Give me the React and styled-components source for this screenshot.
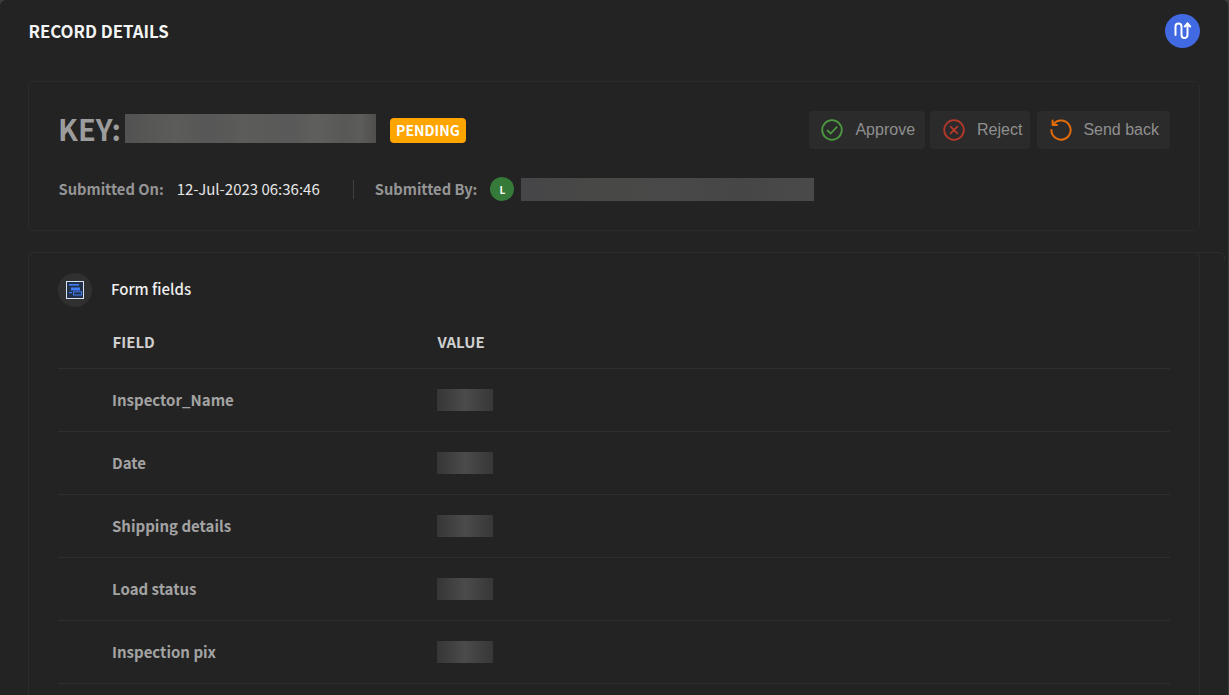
import styled, { createGlobalStyle } from 'styled-components';

const GlobalStyle = createGlobalStyle`
  html, body {
    margin: 0;
    height: 100%;
    overflow: hidden;
    background: #3c3c3c;
  }
`;

const Page = styled.div`
  height: 695px;
  box-sizing: border-box;
  overflow: hidden;
  padding: 0 0 0 28px;
  background: #232323;
  border-radius: 6px 6px 0 0;
  border-right: 1px solid #3a3a3a;
  font-family: 'Noto Sans CJK SC', 'Noto Sans', sans-serif;
`;

const Header = styled.header`
  display: flex;
  align-items: center;
  justify-content: space-between;
  height: 62px;
  margin-right: 28px;
`;

const Title = styled.h1`
  margin: 0 0 0 0.5px;
  font-size: 16.8px;
  font-weight: 700;
  color: #f4f4f4;
`;

const Logo = styled.div`
  width: 35px;
  height: 34px;
  border-radius: 50%;
  background: #4169e1;
  display: flex;
  align-items: center;
  justify-content: center;
`;

const Card = styled.section`
  position: relative;
  width: 1172px;
  box-sizing: border-box;
  border: 1px solid #2c2c2c;
  border-radius: 6px;
`;

const SummaryCard = styled(Card)`
  height: 150px;
  margin-top: 19px;
  padding: 28px 29px 0 29px;
`;

const TopRow = styled.div`
  display: flex;
  align-items: flex-start;
  justify-content: space-between;
`;

const KeyBlock = styled.div`
  display: flex;
  align-items: center;
  height: 37px;
`;

const KeyLabel = styled.span`
  font-size: 29px;
  font-weight: 700;
  color: #9c9c9c;
  margin: 0 4px 2px 0;
`;

const BlurBar = styled.div`
  width: ${p => p.$w}px;
  height: ${p => p.$h}px;
  flex: none;
  background: ${p => p.$bg};
`;

const StatusBadge = styled.span`
  margin: 4px 0 0 14px;
  padding-bottom: 2px;
  box-sizing: border-box;
  width: 76px;
  height: 25px;
  display: flex;
  align-items: center;
  justify-content: center;
  border-radius: 4px;
  background: #ffa500;
  color: #fff;
  font-size: 14px;
  font-weight: 700;
`;

const Actions = styled.div`
  display: flex;
  gap: 5px;
  margin-top: 1px;
`;

const ActionButton = styled.button`
  height: 38px;
  margin-left: ${p => p.$ml || 0}px;
  padding: 0 ${p => p.$pr}px 0 ${p => p.$pl}px;
  display: flex;
  align-items: center;
  gap: ${p => p.$gap}px;
  border: 0;
  border-radius: 4px;
  background: #2b2b2b;
  color: #8f8f8f;
  font-family: 'Liberation Sans', Arial, sans-serif;
  font-size: 16px;
`;

const MetaRow = styled.div`
  display: flex;
  align-items: center;
  height: 24px;
  margin-top: 28px;
  padding-left: 0.5px;
  font-size: 15px;
`;

const MetaLabel = styled.span`
  font-size: 14.7px;
  font-weight: 700;
  color: #959595;
  margin: 0 13px 2px 0;
`;

const MetaValue = styled.span`
  margin-bottom: 2px;
  color: #e6e6e6;
`;

const Divider = styled.span`
  width: 1px;
  height: 19px;
  margin: 0 21px 0 33px;
  background: #3a4043;
`;

const Avatar = styled.span`
  width: 24px;
  height: 24px;
  border-radius: 50%;
  background: #357a38;
  color: #fff;
  font-size: 10px;
  font-weight: 700;
  display: flex;
  align-items: center;
  justify-content: center;
  margin-right: 7px;
`;

const FieldsCard = styled(Card)`
  margin-top: 21px;
  height: 460px;
  padding: 20px 29px 0 29px;
  border-bottom: 0;
  &::after {
    content: '';
    position: absolute;
    top: -1px;
    left: 1100px;
    right: -26px;
    height: 8px;
    border-top: 1px solid #2c2c2c;
    border-right: 1px solid #2c2c2c;
    border-top-right-radius: 5px;
  }
`;

const SectionHead = styled.div`
  display: flex;
  align-items: center;
  gap: 19px;
  height: 34px;
`;

const SectionIcon = styled.div`
  width: 34px;
  height: 34px;
  border-radius: 50%;
  background: #303030;
  display: flex;
  align-items: center;
  justify-content: center;
`;

const SectionTitle = styled.span`
  margin-bottom: 3px;
  font-size: 15px;
  font-weight: 500;
  color: #eeeeee;
`;

const Row = styled.div`
  display: grid;
  grid-template-columns: 325px 1fr;
  align-items: center;
  box-sizing: border-box;
  height: ${p => (p.$head ? 62 : 63)}px;
  padding: ${p => (p.$head ? '8px 0 0 54.5px' : '0 0 0 54px')};
  border-bottom: 1px solid #2e2e2e;
`;

const HeadCell = styled.span`
  font-size: 15px;
  font-weight: 700;
  color: #cfcfcf;
`;

const FieldName = styled.span`
  margin-bottom: 2px;
  font-size: 15px;
  font-weight: 700;
  color: #a3a3a3;
`;

const rows = ['Inspector_Name', 'Date', 'Shipping details', 'Load status', 'Inspection pix'];

const blurKey =
  'linear-gradient(90deg, #525252, #5c5c5a 20%, #565756 33%, #5c5c5a 48%, #585958 66%, #5f5f5d 76%, #585857 88%, #5c5c5a 94%, #4f4e4d)';
const blurUser = 'linear-gradient(90deg, #464649, #484846 25%, #494949 50%, #464646 75%, #4a4a4a)';
const blurValue = 'linear-gradient(90deg, #363636, #4b4b4b 50%, #373737)';

const LogoIcon = () => (
  <svg width="22" height="22" viewBox="0 0 22 22" fill="none" stroke="#fff" strokeWidth="2" strokeLinecap="round" strokeLinejoin="round">
    <path d="M3.5 15V6.5a3 3 0 0 1 6 0V15a3 3 0 0 0 6 0V3.5" />
    <path d="M12.8 6.5l2.7-3 2.7 3" />
  </svg>
);

const FormIcon = () => (
  <svg width="18" height="18" viewBox="0 0 18 18">
    <rect x="0.5" y="0.5" width="17" height="17" fill="#23304a" stroke="#d5e4f0" />
    <rect x="3" y="3" width="10" height="1.6" fill="#3f7ff5" />
    <rect x="5" y="6.5" width="9" height="3" fill="#3f7ff5" />
    <rect x="3" y="11" width="3" height="1.2" fill="#3f7ff5" />
    <rect x="7.5" y="10.8" width="8" height="3.2" fill="none" stroke="#3f7ff5" />
  </svg>
);

const ApproveIcon = () => (
  <svg width="22" height="22" viewBox="0 0 22 22" fill="none" stroke="#4c9a3f" strokeWidth="1.8" strokeLinecap="round" strokeLinejoin="round">
    <circle cx="11" cy="11" r="9.8" />
    <path d="M6.5 11.5l3.2 3 6-6.3" />
  </svg>
);

const RejectIcon = () => (
  <svg width="22" height="22" viewBox="0 0 22 22" fill="none" stroke="#b5392a" strokeWidth="1.8" strokeLinecap="round">
    <circle cx="11" cy="11" r="9.8" />
    <path d="M7.6 7.6l6.8 6.8M14.4 7.6l-6.8 6.8" />
  </svg>
);

const SendBackIcon = () => (
  <svg width="22" height="22" viewBox="0 0 22 22" fill="none" stroke="#e36c0a" strokeWidth="2" strokeLinecap="round" strokeLinejoin="round">
    <path d="M3.4 5.2A9.6 9.6 0 1 1 1.4 11" />
    <path d="M2.6 1.6v4.4H7" />
  </svg>
);

const App = () => (
  <>
    <GlobalStyle />
    <Page>
      <Header>
        <Title>RECORD DETAILS</Title>
        <Logo>
          <LogoIcon />
        </Logo>
      </Header>

      <SummaryCard>
        <TopRow>
          <KeyBlock>
            <KeyLabel>KEY:</KeyLabel>
            <BlurBar $w={251} $h={29} $bg={blurKey} />
            <StatusBadge>PENDING</StatusBadge>
          </KeyBlock>
          <Actions>
            <ActionButton $pl={12} $pr={10} $gap={12}>
              <ApproveIcon />
              Approve
            </ActionButton>
            <ActionButton $pl={13} $pr={8} $gap={12}>
              <RejectIcon />
              Reject
            </ActionButton>
            <ActionButton $ml={2} $pl={13} $pr={11} $gap={11}>
              <SendBackIcon />
              Send back
            </ActionButton>
          </Actions>
        </TopRow>
        <MetaRow>
          <MetaLabel>Submitted On:</MetaLabel>
          <MetaValue>12-Jul-2023 06:36:46</MetaValue>
          <Divider />
          <MetaLabel>Submitted By:</MetaLabel>
          <Avatar>L</Avatar>
          <BlurBar $w={293} $h={23} $bg={blurUser} />
        </MetaRow>
      </SummaryCard>

      <FieldsCard>
        <SectionHead>
          <SectionIcon>
            <FormIcon />
          </SectionIcon>
          <SectionTitle>Form fields</SectionTitle>
        </SectionHead>
        <Row $head>
          <HeadCell>FIELD</HeadCell>
          <HeadCell>VALUE</HeadCell>
        </Row>
        {rows.map(name => (
          <Row key={name}>
            <FieldName>{name}</FieldName>
            <BlurBar $w={56} $h={22} $bg={blurValue} />
          </Row>
        ))}
      </FieldsCard>
    </Page>
  </>
);

export default App;
